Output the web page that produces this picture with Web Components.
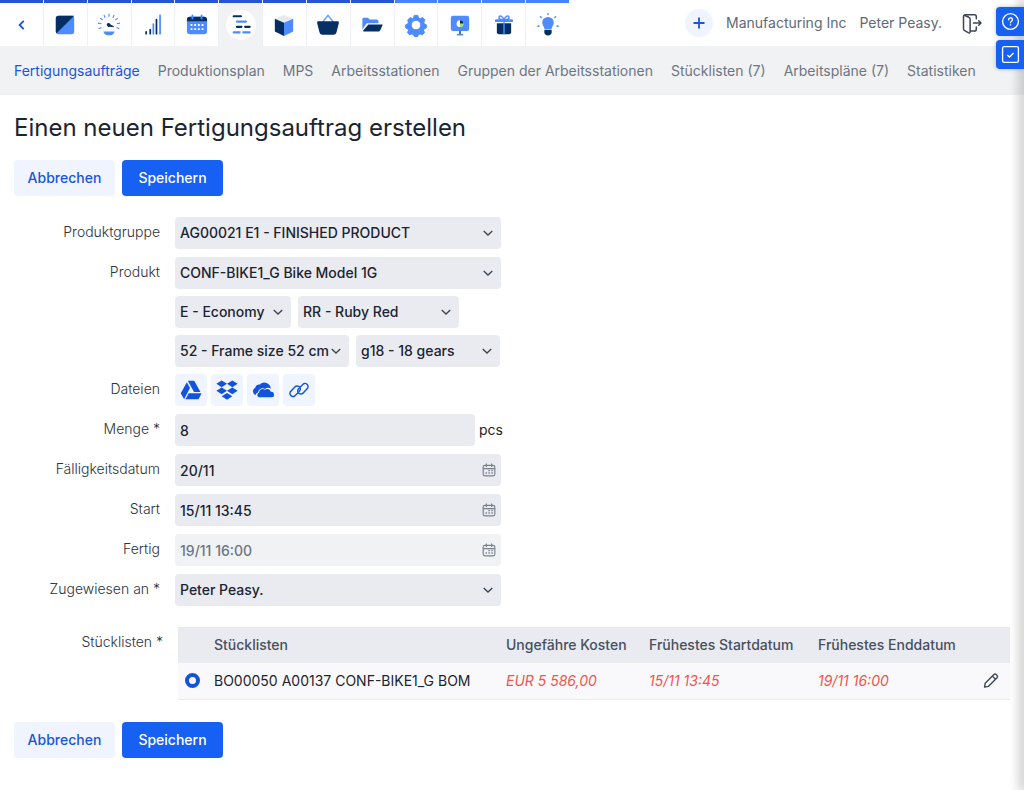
<!DOCTYPE html>
<html lang="de">
<head>
<meta charset="utf-8">
<meta name="viewport" content="width=device-width, initial-scale=1">
<title>Einen neuen Fertigungsauftrag erstellen</title>
<style>
:root{
  --blue:#1660f3; --link:#1b55d8; --pale:#eff4ff; --field:#eaebf0; --bar:#f1f2f4;
  --ink:#1b2430; --muted:#6c7684;
}
body{margin:0;background:#fff;color:var(--ink);font:14px/20px Inter,"Liberation Sans",sans-serif;}
</style>
</head>
<body>
<erp-page></erp-page>
<script>
const ICONS = {
  back:`<path d="M15 7.500L10.500 12l4.500 4.500" fill="none" stroke="#1b55d8" stroke-width="2"/>`,
  square:`<path d="M5 2h14a3 3 0 0 1 3 3v14a3 3 0 0 1-3 3H5a3 3 0 0 1-3-3V5a3 3 0 0 1 3-3z" fill="#4d8bff"/><path d="M22 2H5a3 3 0 0 0-3 3v14a3 3 0 0 0 .9 2.100z" fill="#052f62"/>`,
  gauge:`<g stroke="#4d8bff" stroke-width="1.200"><path d="M12-.5V3M6.500 1l1.300 3M17.500 1l-1.300 3M2.500 4.500l2.700 2.200M21.500 4.500l-2.700 2.200M0 10l3.500.6M24 10l-3.500.6M.8 16l3-1.200M23.200 16l-3-1.200"/></g><path d="M5.800 19h12.400c-.8 2.800-3 4.300-6.200 4.300S6.600 21.800 5.800 19z" fill="#4d8bff"/><circle cx="11.500" cy="11.800" r="2" fill="#052f62"/><path d="M11 10.500l6 3.300-6-.5z" fill="#052f62" stroke="#052f62"/>`,
  signal:`<g stroke-width="1.900" stroke-linecap="round"><path d="M4.500 19.500v2M9 17v4.500M15.800 6v15.500" stroke="#052f62"/><path d="M12.400 11v10.500M19.700 1.500v20" stroke="#4d8bff"/></g>`,
  calendar:`<rect x="1" y="3" width="22" height="19" rx="3.500" fill="#4d8bff"/><path d="M1 8V6.500A3.500 3.500 0 0 1 4.500 3h15A3.500 3.500 0 0 1 23 6.500V8z" fill="#052f62"/><path d="M7 1.500V5M17 1.500V5" stroke="#4d8bff" stroke-width="2" stroke-linecap="round"/><g fill="#fff"><path d="M5 11h2v2H5zM9 11h2v2H9zM13 11h2v2h-2zM17 11h2v2h-2zM5 15.500h2v2H5zM9 15.500h2v2H9zM13 15.500h2v2h-2zM17 15.500h2v2h-2z"/></g>`,
  plan:`<g stroke-width="2.300" stroke-linecap="round"><path d="M4 2.500h8M7.500 14h5M16.500 14h5" stroke="#052f62"/><path d="M7.500 8.300h10M4 20h6.500M14.500 20h7" stroke="#4d8bff"/></g>`,
  cube:`<path d="M12 1l10 4.200-10 4.300L2 5.200z" fill="#e8eaee"/><path d="M2 5.200l10 4.300V24L2 19z" fill="#052f62"/><path d="M22 5.200L12 9.500V24l10-5z" fill="#4d8bff"/>`,
  basket:`<path d="M6 9l6-7.500L18 9" fill="none" stroke="#6a9dff" stroke-width="1.700"/><path d="M1.500 8h21a1.500 1.500 0 0 1 1.300 2l-2.500 10a3 3 0 0 1-3 2.500H5.700a3 3 0 0 1-3-2.500L.2 10A1.500 1.500 0 0 1 1.500 8z" fill="#052f62"/>`,
  folder:`<path d="M1.500 17V5.500A1.500 1.500 0 0 1 3 4h4.500l2 2H17a2 2 0 0 1 2 2v2H8c-2 0-2.500.7-3.300 2.300z" fill="#4d8bff"/><path d="M8 11.500h15c.6 0 .8.300.5.900l-2.500 5.200c-.5 1-1 1.400-2 1.400H3c-.8 0-1-.3-.6-1z" fill="#052f62"/>`,
  gear:`<path fill="#4d8bff" stroke="#4d8bff" stroke-width="1" stroke-linejoin="round" fill-rule="evenodd" d="M10 1.500h4l.8 2.800 1.800.8 2.600-1.300 2.600 2.700-1.300 2.600.8 1.900 2 .8v3.400l-2.200.8-.8 1.900 1.100 2.300-2.600 2.600-2.400-1.100-1.700.8-.8 2h-3.800l-.8-2-1.800-.8-2.400 1.100-2.500-2.600 1.100-2.300-.8-1.900-2.200-.8v-3.400l2.200-.8.7-1.900L3 6.500l2.600-2.700 2.600 1.300 1.200-.8zM12 6.900a5.200 5.200 0 1 0 0 10.400 5.200 5.200 0 0 0 0-10.400z"/>`,
  board:`<path d="M12 18v4" stroke="#052f62" stroke-width="1.500"/><path d="M9.500 22.500h5" stroke="#4d8bff" stroke-width="2" stroke-linecap="round"/><rect x="2" y="2" width="20" height="16.500" rx="2.500" fill="#4d8bff"/><circle cx="12" cy="10.500" r="3.700" fill="#fff"/><path d="M12 10.500V6.800a3.700 3.700 0 0 1 3.700 3.700z" fill="#052f62"/><path d="M12 10.500h3.700a3.700 3.700 0 0 1-3.700 3.700z" fill="#a7df63"/>`,
  gift:`<path d="M12 6c-1.500-4-5-5-5.500-2.500C6.300 5 7.500 6 9 6h6c1.500 0 2.700-1 2.500-2.500C17 1 13.500 2 12 6z" fill="none" stroke="#4d8bff" stroke-width="1.600"/><path d="M4.200 10h15.600v10a2 2 0 0 1-2 2H6.200a2 2 0 0 1-2-2z" fill="#052f62"/><rect x="2.200" y="5.800" width="19.600" height="3" rx="1" fill="#4d8bff"/><path d="M12 7v15" stroke="#4d8bff" stroke-width="1.600"/>`,
  bulb:`<path d="M12 3.200a6.300 6.300 0 0 1 6.300 6.300c0 3-2.500 4.300-2.500 7.500H8.200c0-3.200-2.500-4.500-2.500-7.500A6.300 6.300 0 0 1 12 3.200z" fill="#4d8bff"/><path d="M8 17.500h8V20c0 2-1.500 3.500-4 3.500S8 22 8 20z" fill="#052f62"/><path d="M12-.4v1M3.800 3l.8.800M20.200 3l-.8.800M1 13.300l1.200-.3M23 13.300l-1.200-.3" stroke="#4d8bff" stroke-width="1.600" stroke-linecap="round"/>`,
  plus:`<path d="M12 6.500v11M6.500 12h11" stroke="#1b55d8" stroke-width="1.800"/>`,
  exit:`<g fill="none" stroke="#3c4653" stroke-width="1.500" stroke-linejoin="round" stroke-linecap="round"><path d="M5 4.500C4 4 3.500 4.300 3.500 5.500v12c0 1 .3 1.700 1.200 2.200l3.500 2c1.200.6 1.900.1 1.900-1.200V8.300c0-1-.3-1.500-1.200-2z"/><path d="M5 3.800h9.500c1.200 0 1.800.6 1.800 1.800v2.200M10.500 20h4c1.200 0 1.800-.6 1.800-1.800V16M13.500 12H21M18.700 9.700L21 12l-2.300 2.300"/></g>`,
  help:`<g fill="none" stroke="#fff" stroke-width="1.700"><circle cx="12" cy="12" r="10"/><path d="M9.600 9.800A2.400 2.400 0 1 1 12.800 12c-.6.300-.8.700-.8 1.700" stroke-linecap="round"/><path d="M12 15.500v1.600"/></g>`,
  check:`<g fill="none" stroke="#fff" stroke-width="1.700"><rect x="2" y="2" width="20" height="20" rx="2"/><path d="M8 12.500l2.800 2.700 5-5.200"/></g>`,
  chevron:`<path d="M3.500 8l8.500 8 8.500-8" fill="none" stroke="#3a4452" stroke-width="2.600"/>`,
  date:`<g fill="none" stroke="#79818d" stroke-width="2"><rect x="2" y="4" width="20" height="18" rx="3"/><path d="M2 9.500h20M7.500 1v6M16.500 1v6"/></g><path d="M11 11.500h2.500V14H11zM16 11.500h2.500V14H16zM6 16h2.500v2.500H6zM11 16h2.500v2.500H11zM16 16h2.500v2.500H16z" fill="#79818d"/>`,
  drive:`<g fill="#1253dc"><path d="M8.500 2h7l6.800 12.300h-7z"/><path d="M7.500 3.500l3.400 6.200L4.500 22 .8 15.500z"/><path d="M9.500 15.500h14L20.300 22H6z"/></g>`,
  dropbox:`<path fill="#1253dc" d="M6.200 1.500l5.800 3.700-5.800 3.700L.4 5.200zM17.800 1.500l5.800 3.700-5.800 3.700L12 5.200zM6.200 9.200l5.800 3.700-5.800 3.700-5.800-3.700zM17.800 9.200l5.800 3.700-5.800 3.700-5.800-3.700zM12 15.200l5.800 3.700-5.800 3.600-5.800-3.600z"/>`,
  cloud:`<path fill="#1253dc" d="M4 17.500A4.300 4.300 0 0 1 3.500 9.500 5 5 0 0 1 8.500 6a7 7 0 0 1 12 4.500c-2-1.500-4.500-1.300-6.200.3-3.500-1.800-7.500.5-7.600 4-1.400.2-2.300 1.200-2.700 2.700z"/><path fill="#1253dc" d="M8 20a2.500 2.500 0 0 1-.3-4.900c0-3.500 3.800-5.300 6.600-3.300 2-2 5.700-.8 6.200 2.200A3 3 0 0 1 21.500 20z"/>`,
  link:`<g fill="none" stroke="#1253dc" stroke-width="1.700" stroke-linecap="round"><path d="M13.500 8.500l4-4a3.800 3.800 0 0 1 5 5.200l-5.500 5.800a3.800 3.800 0 0 1-5.800-.2c-1.200-1.700-.7-3.700.6-5"/><path d="M10.500 15.500l-4 4a3.800 3.800 0 0 1-5-5.200L7 8.500a3.800 3.800 0 0 1 5.800.2c1.200 1.700.7 3.700-.6 5"/></g>`,
  pencil:`<g fill="none" stroke="#3c4653" stroke-width="2.200" stroke-linejoin="round"><path d="M2.500 22.500l1-6L17.500 2.500a2.500 2.500 0 0 1 3.500 0l1.500 1.500a2.500 2.500 0 0 1 0 3.500L8.500 21.500z"/><path d="M15 5l5 5"/></g>`
};

const define = (name, html, setup) => customElements.define(name, class extends HTMLElement {
  constructor(){
    super();
    const t = document.createElement('template');
    t.innerHTML = html;
    this.attachShadow({mode:'open'}).append(t.content.cloneNode(true));
  }
  connectedCallback(){ if (setup) setup(this, this.shadowRoot); }
});

define('erp-icon', `<style>:host{display:block;width:24px;height:24px;flex:none}svg{display:block;width:100%;height:100%;overflow:visible}</style><svg viewBox="0 0 24 24" aria-hidden="true"></svg>`,
  (el, root) => { root.querySelector('svg').innerHTML = ICONS[el.getAttribute('name')] || ''; });

define('app-tile', `<style>
:host{display:block;flex:1;background:#fff;border-top:3px solid #2257d0}
:host([light]){border-top-color:#4485fe}
:host([active]){background:var(--bar)}
a{display:flex;align-items:center;justify-content:center;height:43px}
span{display:flex;align-items:center;justify-content:center;width:30px;height:30px;border-radius:50%}
:host([active]) span{background:#fff}
erp-icon{width:22px;height:22px}
</style><a href="#"><span><erp-icon></erp-icon></span></a>`,
  (el, root) => {
    root.querySelector('erp-icon').shadowRoot.querySelector('svg').innerHTML = ICONS[el.getAttribute('icon')];
    root.querySelector('a').setAttribute('aria-label', el.getAttribute('label'));
  });

define('app-bar', `<style>
:host{display:flex;justify-content:space-between;height:46px;background:#fff}
nav{display:flex;gap:1px;flex:0 1 569px;background:#eef0f4}
.account{display:flex;align-items:center;padding-right:40px;color:#5f6978}
.account a{color:inherit;text-decoration:none;white-space:nowrap}
.add{display:flex;align-items:center;justify-content:center;width:28px;height:28px;border-radius:50%;background:var(--pale);margin-right:13px}
.user{margin:0 18px 0 13px}
</style>
<nav aria-label="Module">
<app-tile icon="back" label="Zurück"></app-tile><app-tile icon="square" label="Start"></app-tile><app-tile icon="gauge" label="Dashboard"></app-tile><app-tile icon="signal" label="CRM"></app-tile><app-tile icon="calendar" label="Kalender"></app-tile><app-tile icon="plan" label="Produktion" active></app-tile><app-tile icon="cube" label="Lager"></app-tile><app-tile icon="basket" label="Einkauf"></app-tile><app-tile icon="folder" label="Buchhaltung"></app-tile><app-tile light icon="gear" label="Einstellungen"></app-tile><app-tile light icon="board" label="Demo"></app-tile><app-tile light icon="gift" label="Empfehlen"></app-tile><app-tile light icon="bulb" label="Ideen"></app-tile>
</nav>
<div class="account"><a class="add" href="#" aria-label="Hinzufügen"><erp-icon name="plus"></erp-icon></a><a href="#">Manufacturing Inc</a><a class="user" href="#">Peter Peasy.</a><a href="#" aria-label="Abmelden"><erp-icon name="exit"></erp-icon></a></div>`);

define('section-nav', `<style>
:host{display:flex;align-items:center;gap:18px;height:49px;padding:0 14px;background:var(--bar)}
::slotted(a){color:var(--muted);text-decoration:none;white-space:nowrap}
::slotted(a[aria-current]){color:var(--link)}
</style><slot></slot>`);

define('action-bar', `<style>
:host{display:flex;gap:7px}
button{font:inherit;font-weight:500;min-width:101px;height:36px;padding:0 12px;border:0;border-radius:4px;background:var(--pale);color:var(--link)}
.save{background:var(--blue);color:#fff}
</style><button type="button">Abbrechen</button><button type="submit" class="save">Speichern</button>`);

define('form-row', `<style>
:host{display:grid;grid-template-columns:146px minmax(0,1fr);gap:15px}
.label{line-height:30px;text-align:right;font-weight:300;color:#2a3340}
.fields{display:flex;gap:7px;align-items:center}
:host([tight]) .fields{gap:4px}
</style><div class="label"><slot name="label"></slot></div><div class="fields"><slot></slot></div>`);

define('field-box', `<style>
:host{display:grid;align-items:center;height:32px;border-radius:4px;background:var(--field);width:326px}
:host([muted]){background:var(--bar)}
::slotted(*){grid-area:1/1;box-sizing:border-box;width:100%;min-width:0;height:100%;margin:0;padding:0 19px 0 5px;border:0;outline:0;background:none;appearance:none;font:inherit;font-weight:500;color:var(--ink)}
::slotted(:disabled){color:var(--muted);opacity:1}
erp-icon{grid-area:1/1;justify-self:end;width:12px;height:12px;margin-right:7px;pointer-events:none}
:host([kind=date]) erp-icon{width:14px;height:14px;margin-right:5px}
</style><slot></slot><erp-icon></erp-icon>`,
  (el, root) => {
    const kind = el.getAttribute('kind');
    root.querySelector('erp-icon').shadowRoot.querySelector('svg').innerHTML = kind === 'date' ? ICONS.date : kind === 'text' ? '' : ICONS.chevron;
  });

define('file-button', `<style>
button{display:flex;align-items:center;justify-content:center;width:32px;height:32px;padding:0;border:0;border-radius:4px;background:var(--pale)}
:host{display:block}
erp-icon{width:22px;height:22px}
:host([icon=link]) erp-icon{width:20px;height:20px}
</style><button type="button"><erp-icon></erp-icon></button>`,
  (el, root) => {
    root.querySelector('erp-icon').shadowRoot.querySelector('svg').innerHTML = ICONS[el.getAttribute('icon')];
    root.querySelector('button').setAttribute('aria-label', el.getAttribute('label'));
  });

define('bom-table', `<style>
:host{display:block}
table{width:100%;border-collapse:collapse;table-layout:fixed}
th,td{box-sizing:border-box;height:36px;padding:0;text-align:left;white-space:nowrap;font-weight:400}
th{background:var(--field);color:#465061;font-weight:500}
td{background:#f9f9fb;border-bottom:1px solid #eceef1}
.pick{width:36px}.cost{width:143px}.start{width:169px}.end{width:165px}.edit{width:27px}
em{color:#f2544c}
input{display:block;appearance:none;box-sizing:border-box;width:15px;height:15px;margin:0 0 0 7px;border:4px solid #1253dc;border-radius:50%;background:#fff}
button{display:block;padding:0;border:0;background:none}
erp-icon{width:15px;height:15px}
</style>
<table><thead><tr><th class="pick"></th><th>Stücklisten</th><th class="cost">Ungefähre Kosten</th><th class="start">Frühestes Startdatum</th><th class="end">Frühestes Enddatum</th><th class="edit"></th></tr></thead>
<tbody><tr><td><input id="bom" type="radio" name="bom" checked></td><td><label for="bom">BO00050 A00137 CONF-BIKE1_G BOM</label></td><td><em>EUR 5 586,00</em></td><td><em>15/11 13:45</em></td><td><em>19/11 16:00</em></td><td><button type="button" aria-label="Bearbeiten"><erp-icon name="pencil"></erp-icon></button></td></tr></tbody></table>`);

define('order-form', `<style>
:host{display:block}
form{display:flex;flex-direction:column}
.rows{display:flex;flex-direction:column;gap:8px;margin:21px 0}
.group{display:flex;flex-direction:column;gap:7px}
.w116{width:116px}.w161{width:161px}.w174{width:174px}.w144{width:144px}.w300{width:300px}
.bom{display:grid;grid-template-columns:149px minmax(0,1fr);gap:15px;margin-bottom:22px}
.bom>span{line-height:30px;text-align:right;font-weight:300;color:#2a3340}
</style>
<form>
<action-bar></action-bar>
<div class="rows">
<form-row><label slot="label" for="pg">Produktgruppe</label><field-box><select id="pg"><option>AG00021 E1 - FINISHED PRODUCT</option></select></field-box></form-row>
<div class="group">
<form-row><label slot="label" for="p">Produkt</label><field-box><select id="p"><option>CONF-BIKE1_G Bike Model 1G</option></select></field-box></form-row>
<form-row><field-box class="w116"><select aria-label="Ausführung"><option>E - Economy</option></select></field-box><field-box class="w161"><select aria-label="Farbe"><option>RR - Ruby Red</option></select></field-box></form-row>
<form-row><field-box class="w174"><select aria-label="Rahmengröße"><option>52 - Frame size 52 cm</option></select></field-box><field-box class="w144"><select aria-label="Gänge"><option>g18 - 18 gears</option></select></field-box></form-row>
<form-row tight><span slot="label">Dateien</span><file-button icon="drive" label="Google Drive"></file-button><file-button icon="dropbox" label="Dropbox"></file-button><file-button icon="cloud" label="OneDrive"></file-button><file-button icon="link" label="Link"></file-button></form-row>
</div>
<form-row tight><label slot="label" for="m">Menge *</label><field-box class="w300" kind="text"><input id="m" value="8"></field-box><span>pcs</span></form-row>
<form-row><label slot="label" for="f">Fälligkeitsdatum</label><field-box kind="date"><input id="f" value="20/11"></field-box></form-row>
<form-row><label slot="label" for="s">Start</label><field-box kind="date"><input id="s" value="15/11 13:45"></field-box></form-row>
<form-row><label slot="label" for="e">Fertig</label><field-box kind="date" muted><input id="e" value="19/11 16:00" disabled></field-box></form-row>
<form-row><label slot="label" for="z">Zugewiesen an *</label><field-box><select id="z"><option>Peter Peasy.</option></select></field-box></form-row>
</div>
<div class="bom"><span>Stücklisten *</span><bom-table></bom-table></div>
<action-bar></action-bar>
</form>`);

define('side-tools', `<style>
:host{position:fixed;top:0;right:0;bottom:0;width:0;box-shadow:0 0 12px 2px rgba(0,0,0,.5)}
div{position:absolute;top:7px;right:0;display:flex;flex-direction:column;gap:4px}
button{display:flex;align-items:center;width:28px;height:29px;padding:0 5px;border:0;border-radius:4px 0 0 4px;background:var(--blue);box-shadow:0 0 4px rgba(0,0,0,.25)}
erp-icon{width:19px;height:19px}
</style><div><button type="button" aria-label="Hilfe"><erp-icon name="help"></erp-icon></button><button type="button" aria-label="Aufgaben"><erp-icon name="check"></erp-icon></button></div>`);

define('erp-page', `<style>
:host{display:block}
main{padding:17px 14px 32px}
h1{margin:0 0 16px;font-size:24px;line-height:32px;font-weight:400}
</style>
<app-bar></app-bar>
<section-nav><a href="#" aria-current="page">Fertigungsaufträge</a><a href="#">Produktionsplan</a><a href="#">MPS</a><a href="#">Arbeitsstationen</a><a href="#">Gruppen der Arbeitsstationen</a><a href="#">Stücklisten (7)</a><a href="#">Arbeitspläne (7)</a><a href="#">Statistiken</a></section-nav>
<main><h1>Einen neuen Fertigungsauftrag erstellen</h1><order-form></order-form></main>
<side-tools></side-tools>`);
</script>
</body>
</html>
